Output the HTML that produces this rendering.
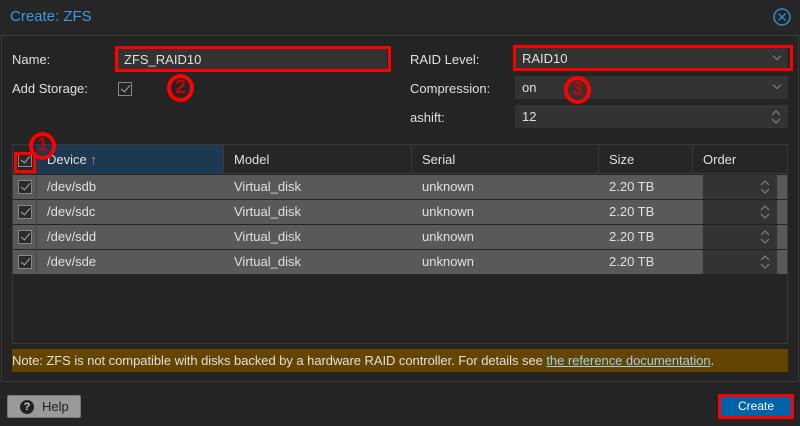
<!DOCTYPE html>
<html><head><style>
*{box-sizing:border-box;margin:0;padding:0}
body{width:800px;height:426px;background:#242424;font-family:"Liberation Sans",sans-serif;font-size:13px;color:#e0e0e0;position:relative;overflow:hidden}
.a{position:absolute}
.field{position:absolute;background:#333;color:#e0e0e0;padding-left:7px;line-height:23px}
.red{position:absolute;border:3px solid #f00}
.chev{position:absolute;right:8px;top:6px;width:6px;height:6px;border-right:1px solid #888;border-bottom:1px solid #888;transform:rotate(45deg)}
.row{position:absolute;left:13px;width:774px;height:24px;background:#595959;line-height:24px}
.row span{position:absolute}
.cb{position:absolute;width:14px;height:14px;border:1px solid #888;background:#2a2a2a}
.cb:after{content:"";position:absolute;left:4px;top:0px;width:4px;height:8px;border-right:1.5px solid #aaa;border-bottom:1.5px solid #aaa;transform:rotate(40deg)}
.circ{position:absolute;width:27px;height:28px;border:4px solid #f00;border-radius:50%;color:#c00;font-weight:bold;font-size:19px;text-align:center;line-height:20px}
.spin{position:absolute;right:7px;top:4px}
</style></head><body>
<div class="a" style="left:0;top:0;width:800px;height:36px;background:#262626;border-bottom:1px solid #3a3a3a"></div>
<div class="a" style="left:10px;top:8px;font-size:15px;color:#3d9be0">Create: ZFS</div>
<svg class="a" style="left:773px;top:8px" width="18" height="18"><circle cx="9" cy="9" r="8" fill="none" stroke="#2a8ed0" stroke-width="1.5"/><path d="M5.5 5.5L12.5 12.5M12.5 5.5L5.5 12.5" stroke="#2a8ed0" stroke-width="1.3"/></svg>
<div class="a" style="left:1px;top:37px;width:798px;height:345px;border:1px solid #3a3a3a;border-top:none"></div>

<div class="a" style="left:12px;top:52px">Name:</div>
<div class="field" style="left:117px;top:48px;width:270px">ZFS_RAID10</div>
<div class="red" style="left:115px;top:46px;width:276px;height:26px"></div>
<div class="a" style="left:12px;top:81px">Add Storage:</div>
<div class="cb" style="left:118px;top:82px;background:transparent"></div>

<div class="a" style="left:410px;top:52px">RAID Level:</div>
<div class="field" style="left:515px;top:47px;width:273px">RAID10<div class="chev"></div></div>
<div class="red" style="left:513px;top:45px;width:280px;height:26px"></div>
<div class="a" style="left:410px;top:81px">Compression:</div>
<div class="field" style="left:515px;top:76px;width:273px">on<div class="chev"></div></div>
<div class="a" style="left:410px;top:110px">ashift:</div>
<div class="field" style="left:515px;top:105px;width:273px">12<svg class="spin" width="10" height="16"><path d="M1 6L5 2L9 6M1 10L5 14L9 10" fill="none" stroke="#888"/></svg></div>

<div class="a" style="left:12px;top:144px;width:776px;height:200px;border:1px solid #3a3a3a;background:#242424"></div>
<div class="a" style="left:13px;top:145px;width:774px;height:29px;background:#262626;border-bottom:1px solid #3a3a3a"></div>
<div class="a" style="left:36px;top:145px;width:187px;height:29px;background:#1e384f"></div>
<div class="a" style="left:223px;top:145px;width:1px;height:29px;background:#3a3a3a"></div>
<div class="a" style="left:411px;top:145px;width:1px;height:29px;background:#3a3a3a"></div>
<div class="a" style="left:598px;top:145px;width:1px;height:29px;background:#3a3a3a"></div>
<div class="a" style="left:692px;top:145px;width:1px;height:29px;background:#3a3a3a"></div>
<div class="cb" style="left:18px;top:153px"></div>
<div class="a" style="left:47px;top:152px">Device <span style="color:#999">↑</span></div>
<div class="a" style="left:234px;top:152px">Model</div>
<div class="a" style="left:422px;top:152px">Serial</div>
<div class="a" style="left:609px;top:152px">Size</div>
<div class="a" style="left:703px;top:152px">Order</div>
<div class="red" style="left:14px;top:152px;width:22px;height:21px"></div>
<div class="circ" style="left:29px;top:132px">1</div>

<div class="row" style="top:175px"><div class="cb" style="left:5px;top:5px"></div><span style="left:34px">/dev/sdb</span><span style="left:221px">Virtual_disk</span><span style="left:409px">unknown</span><span style="left:596px">2.20 TB</span><div class="a" style="left:690px;top:0;width:74px;height:24px;background:#333"><svg class="spin" width="10" height="16"><path d="M1 6L5 2L9 6M1 10L5 14L9 10" fill="none" stroke="#888"/></svg></div></div>
<div class="row" style="top:200px"><div class="cb" style="left:5px;top:5px"></div><span style="left:34px">/dev/sdc</span><span style="left:221px">Virtual_disk</span><span style="left:409px">unknown</span><span style="left:596px">2.20 TB</span><div class="a" style="left:690px;top:0;width:74px;height:24px;background:#333"><svg class="spin" width="10" height="16"><path d="M1 6L5 2L9 6M1 10L5 14L9 10" fill="none" stroke="#888"/></svg></div></div>
<div class="row" style="top:225px"><div class="cb" style="left:5px;top:5px"></div><span style="left:34px">/dev/sdd</span><span style="left:221px">Virtual_disk</span><span style="left:409px">unknown</span><span style="left:596px">2.20 TB</span><div class="a" style="left:690px;top:0;width:74px;height:24px;background:#333"><svg class="spin" width="10" height="16"><path d="M1 6L5 2L9 6M1 10L5 14L9 10" fill="none" stroke="#888"/></svg></div></div>
<div class="row" style="top:250px"><div class="cb" style="left:5px;top:5px"></div><span style="left:34px">/dev/sde</span><span style="left:221px">Virtual_disk</span><span style="left:409px">unknown</span><span style="left:596px">2.20 TB</span><div class="a" style="left:690px;top:0;width:74px;height:24px;background:#333"><svg class="spin" width="10" height="16"><path d="M1 6L5 2L9 6M1 10L5 14L9 10" fill="none" stroke="#888"/></svg></div></div>
<div class="a" style="left:36px;top:175px;width:1px;height:99px;background:#444"></div>

<div class="a" style="left:12px;top:349px;width:776px;height:23px;background:#634400;line-height:23px;white-space:nowrap;letter-spacing:-0.05px">Note: ZFS is not compatible with disks backed by a hardware RAID controller. For details see <span style="color:#9ccff0;text-decoration:underline">the reference documentation</span>.</div>

<div class="a" style="left:7px;top:395px;width:74px;height:23px;background:#9a9a9a;border:1px solid #777;border-radius:2px;color:#222;line-height:21px;padding-left:34px">Help</div>
<div class="a" style="left:20px;top:400px;width:14px;height:14px;border-radius:50%;background:#222;color:#ccc;font-size:11px;font-weight:bold;text-align:center;line-height:14px">?</div>
<div class="a" style="left:718px;top:394px;width:76px;height:25px;background:#0062a8;border:3px solid #f00;color:#fff;font-size:12px;text-align:center;line-height:19px">Create</div>

<div class="circ" style="left:167px;top:74px">2</div>
<div class="circ" style="left:564px;top:76px">3</div>
</body></html>
